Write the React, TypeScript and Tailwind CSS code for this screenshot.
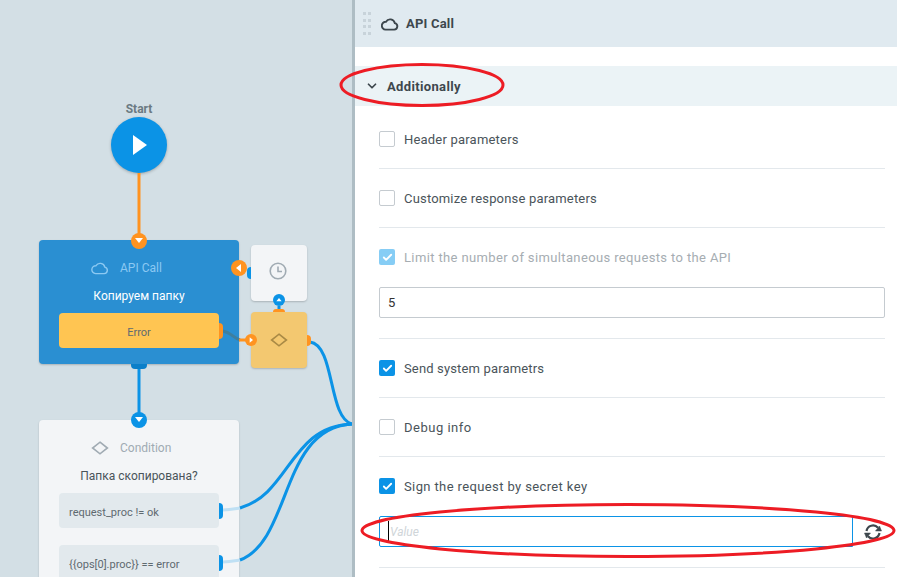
import React from 'react';
import { Check, ChevronDown } from 'lucide-react';

const font = "font-['Roboto','Liberation_Sans',sans-serif]";

const CloudIcon = ({ className }: { className: string }) => (
  <svg viewBox="0 0 18 14" className={className} fill="none" stroke="currentColor" strokeWidth="1.4">
    <path d="M4.6 12.6h8.6a3.3 3.3 0 0 0 .6-6.5A4.8 4.8 0 0 0 5 4.7a3.95 3.95 0 0 0-.4 7.9z" />
  </svg>
);

const Diamond = ({ className }: { className: string }) => (
  <svg viewBox="0 0 18 14" className={className} fill="none" stroke="currentColor" strokeWidth="1.6">
    <path d="M9 1.2 16.4 7 9 12.8 1.6 7z" />
  </svg>
);

const Port = ({ className, dir, small }: { className: string; dir: 'down' | 'left' | 'right' | 'up'; small?: boolean }) => {
  const pts = { down: '2,3 10,3 6,8', left: '8,2 8,10 3,6', right: '4,2 4,10 9,6', up: '2,8 10,8 6,3' }[dir];
  return (
    <div className={`absolute flex items-center justify-center rounded-full ${className}`}>
      <svg viewBox="0 0 12 12" className={small ? 'h-2 w-2' : 'h-3 w-3'} fill="white">
        <polygon points={pts} />
      </svg>
    </div>
  );
};

function Canvas() {
  return (
    <div className="relative h-full w-[352px] shrink-0 overflow-hidden bg-[#d3dfe5]">
      <div className="absolute left-[99px] top-[102px] w-20 text-center text-[12px] font-bold leading-[15px] text-[#6b7a82]">Start</div>
      <div className="absolute left-[111px] top-[117px] flex h-14 w-14 items-center justify-center rounded-full bg-[#0b93e6] shadow-[0_1px_3px_rgba(0,0,0,0.25)]">
        <svg viewBox="0 0 16 20" className="ml-0.5 h-5 w-4" fill="white">
          <polygon points="1,0 15,10 1,20" />
        </svg>
      </div>

      <div className="absolute left-[39px] top-[240px] flex h-[124px] w-[200px] flex-col items-center rounded-sm bg-[#2a8fd2] shadow-[0_1px_2px_rgba(0,0,0,0.2)]">
        <div className="mt-5 flex h-4 w-full items-center pl-[52px] text-[12px] text-[#8cc9f2]">
          <CloudIcon className="mr-[11px] h-[14px] w-[18px]" />
          API Call
        </div>
        <div className="mt-3 text-[12px] leading-[16px] text-white">Копируем папку</div>
        <div className="mt-[9px] flex h-[35px] w-40 items-center justify-center rounded-sm bg-[#ffc552] pt-[5px] text-[11px] text-[#5f6a70]">Error</div>
      </div>

      <div className="absolute left-[251px] top-[245px] flex h-14 w-14 items-center justify-center rounded-sm bg-[#f3f5f7] pb-1 pr-0.5 text-[#a0abb3] shadow-[0_1px_2px_rgba(0,0,0,0.2)]">
        <svg viewBox="0 0 18 18" className="h-[18px] w-[18px]" fill="none" stroke="currentColor" strokeWidth="1.6">
          <circle cx="9" cy="9" r="7.8" />
          <path d="M9 4.5V9.5H13" />
        </svg>
      </div>
      <div className="absolute left-[251px] top-[312px] flex h-14 w-14 items-center justify-center rounded-sm bg-[#f3c870] text-[#a98a45] shadow-[0_1px_2px_rgba(0,0,0,0.2)]">
        <Diamond className="h-[14px] w-[18px]" />
      </div>

      <div className="absolute left-[39px] top-[420px] flex h-[180px] w-[200px] flex-col items-center rounded-sm bg-[#f3f5f7] shadow-[0_1px_2px_rgba(0,0,0,0.2)]">
        <div className="mt-5 flex h-4 w-full items-center pl-[52px] text-[12px] text-[#a0abb3]">
          <Diamond className="mr-[11px] h-[14px] w-[18px]" />
          Condition
        </div>
        <div className="mt-[12px] text-[12px] leading-[16px] text-[#4a545a]">Папка скопирована?</div>
        <div className="mt-[9px] flex h-[35px] w-40 items-center rounded-sm bg-[#e2e9ed] pl-2.5 pt-[5px] text-[11px] text-[#5f6a70]">request_proc != ok</div>
        <div className="mt-[17px] flex h-[35px] w-40 items-center rounded-sm bg-[#e2e9ed] pl-2.5 pt-[5px] text-[11px] text-[#5f6a70]">{'{{ops[0].proc}} == error'}</div>
      </div>

      <svg className="absolute left-0 top-0 h-full w-full" viewBox="0 0 352 577" fill="none">
        <path d="M139 173V236" stroke="#ff9320" strokeWidth="3" />
        <path d="M139 369V416" stroke="#0b93e6" strokeWidth="3" />
        <path d="M279 306V309" stroke="#0b93e6" strokeWidth="3" />
        <path d="M222 331C231 332 233 338 240 340" stroke="#3f7f9f" strokeWidth="3" />
        <path d="M239 340H246" stroke="#ff9320" strokeWidth="3" />
        <path d="M223 510C230 510 234 509 240 508" stroke="#bfe0f4" strokeWidth="3" />
        <path d="M223 562C230 562 234 561 240 560" stroke="#bfe0f4" strokeWidth="3" />
        <path d="M240 508C290 494 290 426 352 424" stroke="#0b93e6" strokeWidth="3" />
        <path d="M240 560C292 540 280 428 352 424" stroke="#0b93e6" strokeWidth="3" />
        <path d="M310 342C335 345 328 418 352 424" stroke="#0b93e6" strokeWidth="3" />
      </svg>

      <div className="absolute left-[219px] top-[323px] h-4 w-1 rounded-r-sm bg-[#ff9320]" />
      <div className="absolute left-[131px] top-[364px] h-[5px] w-4 rounded-b-sm bg-[#0b7fc9]" />
      <Port className="left-[131px] top-[233px] h-4 w-4 bg-[#ff9320]" dir="down" />
      <Port className="left-[231px] top-[260px] h-4 w-4 bg-[#ff9320]" dir="left" />
      <div className="absolute left-[247px] top-[267px] h-3 w-1 rounded-l-sm bg-[#0b93e6]" />
      <div className="absolute left-[273px] top-[309px] h-[3px] w-3 rounded-t-sm bg-[#ff9320]" />
      <div className="absolute left-[307px] top-[335px] h-[11px] w-1 rounded-r-sm bg-[#ff9320]" />
      <Port className="left-[273px] top-[294px] h-3 w-3 bg-[#0b93e6]" dir="up" small />
      <Port className="left-[245px] top-[334px] h-3 w-3 bg-[#ff9320]" dir="right" small />
      <div className="absolute left-[219px] top-[503px] h-4 w-1 rounded-r-sm bg-[#0b93e6]" />
      <div className="absolute left-[219px] top-[555px] h-4 w-1 rounded-r-sm bg-[#0b93e6]" />
      <Port className="left-[131px] top-[412px] h-4 w-4 bg-[#0b93e6]" dir="down" />
    </div>
  );
}

type Box = 'off' | 'on' | 'faded';

function CheckRow({ label, state, tracking }: { label: string; state: Box; tracking: string }) {
  return (
    <div className="flex h-[22px] items-center gap-[9px]">
      {state === 'off' ? (
        <span className="h-4 w-4 rounded-[2px] border border-[#c5cbd0] bg-white" />
      ) : (
        <span className={`flex h-4 w-4 items-center justify-center rounded-[2px] ${state === 'on' ? 'bg-[#0b93e6]' : 'bg-[#86cdf5]'}`}>
          <Check size={11} strokeWidth={4} color="white" />
        </span>
      )}
      <span className={`pt-px text-[13px] ${tracking} ${state === 'faded' ? 'text-[#a6adb2]' : 'text-[#4a545a]'}`}>{label}</span>
    </div>
  );
}

const Rule = () => <div className="h-px bg-[#e3e8ec]" />;

function Panel() {
  return (
    <div className="relative flex h-full min-w-0 flex-1 flex-col overflow-hidden bg-white">
      <div className="flex h-[47px] shrink-0 items-center bg-[#e0eaf0] pl-2">
        <div className="grid grid-cols-2 gap-x-[2px] gap-y-[3.5px]">
          {Array.from({ length: 8 }).map((_, i) => (
            <span key={i} className="h-[3px] w-[3px] bg-[#c8d3da]" />
          ))}
        </div>
        <CloudIcon className="ml-[10px] h-[14px] w-[18px] stroke-[1.9] text-[#3d474d]" />
        <span className="ml-[7px] text-[13px] font-bold tracking-[0.2px] text-[#3d474d]">API Call</span>
      </div>

      <div className="mt-[19px] flex h-10 shrink-0 items-center bg-[#ebf3f6] pl-[10px] text-[#3d474d]">
        <ChevronDown size={14} strokeWidth={3} />
        <span className="ml-[8px] pt-0.5 text-[13px] font-bold tracking-[0.35px]">Additionally</span>
      </div>

      <div className="flex flex-col pl-6 pr-3">
        <div className="pb-[18px] pt-[22px]"><CheckRow label="Header parameters" state="off" tracking="tracking-[0.2px]" /></div>
        <Rule />
        <div className="py-[18px]"><CheckRow label="Customize response parameters" state="off" tracking="tracking-[0.18px]" /></div>
        <Rule />
        <div className="pt-[18px]"><CheckRow label="Limit the number of simultaneous requests to the API" state="faded" tracking="tracking-[0.37px]" /></div>
        <div className="mb-5 mt-[19px] flex h-[31px] items-center rounded-[2px] border border-[#c5cbd0] pl-2 text-[13px] text-[#333]">5</div>
        <Rule />
        <div className="py-[18px]"><CheckRow label="Send system parametrs" state="on" tracking="tracking-[0.15px]" /></div>
        <Rule />
        <div className="py-[18px]"><CheckRow label="Debug info" state="off" tracking="tracking-[0.5px]" /></div>
        <Rule />
        <div className="pt-[18px]"><CheckRow label="Sign the request by secret key" state="on" tracking="tracking-[0.38px]" /></div>
        <div className="mb-5 mt-[19px] flex h-[31px] items-center">
          <div className="flex h-full flex-1 items-center rounded-l-[2px] border border-[#0b93e6] pl-2">
            <span className="h-[22px] w-px bg-black" />
            <span className="ml-px text-[12px] italic text-[#cfd5d9]">Value</span>
          </div>
          <div className="flex h-full w-8 items-center justify-center pl-2 text-[#3d474d]">
            <svg viewBox="0 0 18 18" className="h-[18px] w-[18px]" fill="none" stroke="currentColor" strokeWidth="2.2">
              <path d="M2.5 8A6.6 6.6 0 0 1 14 4.8" />
              <path d="M15.5 10A6.6 6.6 0 0 1 4 13.2" />
              <path d="M17.5 8H11.5L15.5 3z" fill="currentColor" strokeWidth="0.5" />
              <path d="M0.5 10H6.5L2.5 15z" fill="currentColor" strokeWidth="0.5" />
            </svg>
          </div>
        </div>
        <Rule />
      </div>
    </div>
  );
}

export default function App() {
  return (
    <div className={`relative flex h-[577px] w-[897px] overflow-hidden ${font}`}>
      <Canvas />
      <div className="h-full w-[3px] shrink-0 bg-[#aebdc4]" />
      <Panel />
      {/* hand-drawn red marks on top of the screenshot */}
      <svg className="pointer-events-none absolute left-0 top-0 h-full w-full" viewBox="0 0 897 577" fill="none" stroke="#ed1c24" strokeWidth="3">
        <ellipse cx="422" cy="85" rx="81" ry="20.5" />
        <ellipse cx="628" cy="530.5" rx="266" ry="26" />
      </svg>
    </div>
  );
}
